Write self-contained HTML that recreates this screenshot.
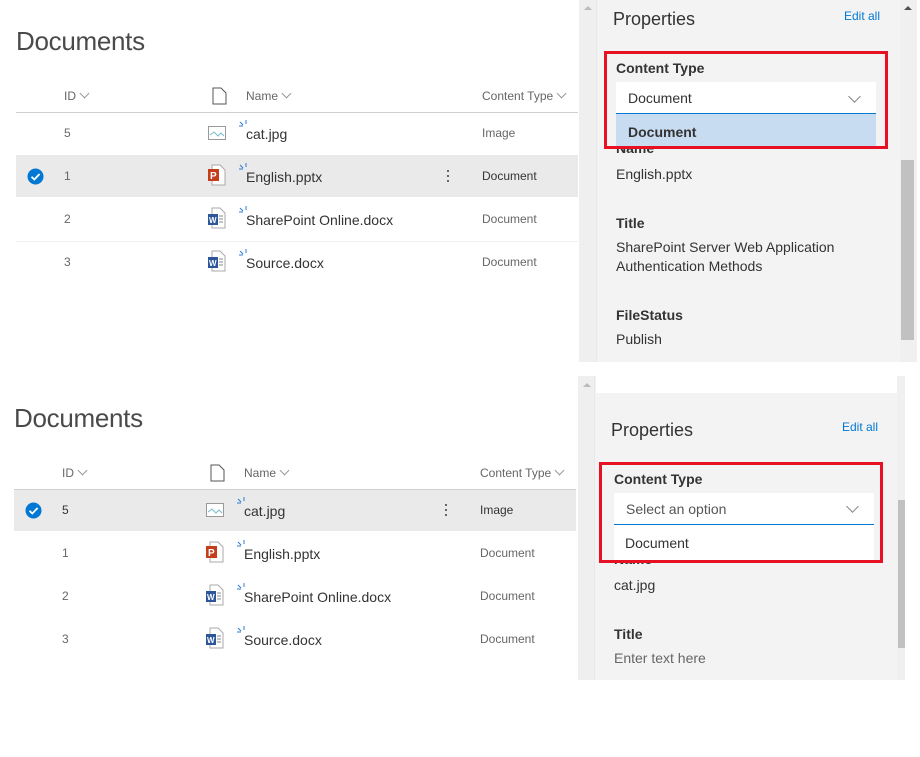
<!DOCTYPE html><html><head><meta charset="utf-8"><style>
*{margin:0;padding:0;box-sizing:border-box}
body{width:920px;height:682px;background:#fff;position:relative;overflow:hidden;font-family:"Segoe UI","Liberation Sans",sans-serif;color:#333}
.a{position:absolute;white-space:nowrap}
.sec{position:absolute;left:0;top:0;width:920px;height:380px}
.h{font-size:12px;color:#666;line-height:16px}
.n{font-size:14px;color:#333;line-height:18px}
.c{font-size:12px;color:#666;line-height:16px}
.lbl{font-size:14px;font-weight:bold;color:#333;line-height:18px}
.val{font-size:14px;color:#333;line-height:18px}
.t{font-size:26px;color:#4a4a4a;letter-spacing:-0.3px}
.chev{display:inline-block;width:7px;height:7px;border-right:1px solid #999;border-bottom:1px solid #999;transform:rotate(45deg);margin-left:5px;position:relative;top:-3px}
</style></head><body>

<div class="sec" style="left:0;top:0">
<div class="a t" style="left:16px;top:26px">Documents</div>
<div class="a h" style="left:64px;top:88px">ID<span class="chev"></span></div>
<svg class="a" style="left:212px;top:87px" width="15" height="18"><path d="M1 1h8l5 5v11H1z" fill="#fff" stroke="#555"/></svg>
<div class="a h" style="left:246px;top:88px">Name<span class="chev"></span></div>
<div class="a h" style="left:482px;top:88px">Content Type<span class="chev"></span></div>
<div class="a" style="left:16px;top:112px;width:562px;height:1px;background:#d0d0d0"></div>
<div class="a" style="left:16px;top:155px;width:562px;height:42px;background:#eaeaea"></div>
<div class="a" style="left:16px;top:241px;width:562px;height:1px;background:#f0f0f0"></div>
<svg class="a" style="left:27px;top:168px" width="17" height="17"><circle cx="8.5" cy="8.5" r="8" fill="#0078d4"/><path d="M4.5 8.7l2.8 2.8 5.3-5.5" stroke="#fff" stroke-width="1.8" fill="none"/></svg>
<div class="a c" style="left:64px;top:125px">5</div>
<div class="a c" style="left:64px;top:168px">1</div>
<div class="a c" style="left:64px;top:211px">2</div>
<div class="a c" style="left:64px;top:254px">3</div>
<svg class="a" style="left:208px;top:126px" width="20" height="16"><rect x="0.5" y="0.5" width="17" height="13" fill="#fff" stroke="#999"/><path d="M2 9l4-3 4 4 3-3 3 3" stroke="#7bc" fill="none"/></svg>
<svg class="a" style="left:207px;top:164px" width="20" height="22"><path d="M5 1h8l5 5v15H5z" fill="#fff" stroke="#aaa"/><rect x="1" y="5" width="11" height="12" fill="#c43e1c"/><text x="3" y="15" font-size="10" fill="#fff" font-family="Liberation Sans" font-weight="bold">P</text></svg>
<svg class="a" style="left:207px;top:207px" width="20" height="22"><path d="M5 1h8l5 5v15H5z" fill="#fff" stroke="#aaa"/><path d="M12 9h4M12 12h4M12 15h4" stroke="#888"/><rect x="1" y="7" width="10" height="11" fill="#2b579a"/><text x="2" y="16" font-size="8" fill="#fff" font-family="Liberation Sans" font-weight="bold">W</text></svg>
<svg class="a" style="left:207px;top:250px" width="20" height="22"><path d="M5 1h8l5 5v15H5z" fill="#fff" stroke="#aaa"/><path d="M12 9h4M12 12h4M12 15h4" stroke="#888"/><rect x="1" y="7" width="10" height="11" fill="#2b579a"/><text x="2" y="16" font-size="8" fill="#fff" font-family="Liberation Sans" font-weight="bold">W</text></svg>
<svg class="a" style="left:238px;top:120px" width="10" height="8"><path d="M1 6h4M2 2l3 3M8 0v4" stroke="#2b7cd3" stroke-width="1"/></svg>
<svg class="a" style="left:238px;top:163px" width="10" height="8"><path d="M1 6h4M2 2l3 3M8 0v4" stroke="#2b7cd3" stroke-width="1"/></svg>
<svg class="a" style="left:238px;top:206px" width="10" height="8"><path d="M1 6h4M2 2l3 3M8 0v4" stroke="#2b7cd3" stroke-width="1"/></svg>
<svg class="a" style="left:238px;top:249px" width="10" height="8"><path d="M1 6h4M2 2l3 3M8 0v4" stroke="#2b7cd3" stroke-width="1"/></svg>
<div class="a n" style="left:246px;top:125px">cat.jpg</div>
<div class="a n" style="left:246px;top:168px">English.pptx</div>
<div class="a n" style="left:246px;top:211px">SharePoint Online.docx</div>
<div class="a n" style="left:246px;top:254px">Source.docx</div>
<div class="a" style="left:447px;top:170px;width:2px;height:2px;background:#666;box-shadow:0 5px #666,0 10px #666"></div>
<div class="a c" style="left:482px;top:125px">Image</div>
<div class="a c" style="left:482px;top:168px;color:#333">Document</div>
<div class="a c" style="left:482px;top:211px">Document</div>
<div class="a c" style="left:482px;top:254px">Document</div>
<div class="a" style="left:579px;top:0;width:338px;height:362px;background:#f3f3f3"></div>
<div class="a" style="left:579px;top:0;width:18px;height:362px;background:#efefef;border-right:1px solid #e8e8e8"></div>
<div class="a" style="left:900px;top:0;width:17px;height:362px;background:#f0f0f0"></div>
<div class="a" style="left:901px;top:160px;width:13px;height:180px;background:#c1c1c1"></div>
<div class="a" style="left:584px;top:6px;width:0;height:0;border:4px solid transparent;border-bottom-color:#bbb;border-top:0"></div>
<div class="a" style="left:904px;top:6px;width:0;height:0;border:4px solid transparent;border-bottom-color:#505050;border-top:0"></div>
<div class="a" style="left:613px;top:9px;font-size:18px;color:#333">Properties</div>
<div class="a" style="left:844px;top:9px;font-size:12px;color:#0078d4">Edit all</div>
<div class="a lbl" style="left:616px;top:139px">Name</div>
<div class="a val" style="left:616px;top:165px">English.pptx</div>
<div class="a lbl" style="left:616px;top:214px">Title</div>
<div class="a val" style="left:616px;top:238px">SharePoint Server Web Application</div>
<div class="a val" style="left:616px;top:257px">Authentication Methods</div>
<div class="a lbl" style="left:616px;top:306px">FileStatus</div>
<div class="a val" style="left:616px;top:330px">Publish</div>
<div class="a lbl" style="left:616px;top:59px">Content Type</div>
<div class="a" style="left:616px;top:82px;width:260px;height:32px;background:#fff;border-bottom:1px solid #0078d4"></div>
<div class="a val" style="left:628px;top:89px">Document</div>
<div class="a" style="left:850px;top:92px;width:9px;height:9px;border-right:1px solid #888;border-bottom:1px solid #888;transform:rotate(45deg)"></div>
<div class="a" style="left:616px;top:114px;width:260px;height:33px;background:#c7dcf1"></div>
<div class="a lbl" style="left:628px;top:123px">Document</div>
<div class="a" style="left:604px;top:51px;width:284px;height:98px;border:3px solid #e81123"></div>
</div>

<div class="sec" style="left:-2px;top:377px">
<div class="a t" style="left:16px;top:26px">Documents</div>
<div class="a h" style="left:64px;top:88px">ID<span class="chev"></span></div>
<svg class="a" style="left:212px;top:87px" width="15" height="18"><path d="M1 1h8l5 5v11H1z" fill="#fff" stroke="#555"/></svg>
<div class="a h" style="left:246px;top:88px">Name<span class="chev"></span></div>
<div class="a h" style="left:482px;top:88px">Content Type<span class="chev"></span></div>
<div class="a" style="left:16px;top:112px;width:562px;height:1px;background:#d0d0d0"></div>
<div class="a" style="left:16px;top:113px;width:562px;height:41px;background:#eaeaea"></div>
<svg class="a" style="left:27px;top:125px" width="17" height="17"><circle cx="8.5" cy="8.5" r="8" fill="#0078d4"/><path d="M4.5 8.7l2.8 2.8 5.3-5.5" stroke="#fff" stroke-width="1.8" fill="none"/></svg>
<div class="a c" style="left:64px;top:125px;color:#333">5</div>
<div class="a c" style="left:64px;top:168px">1</div>
<div class="a c" style="left:64px;top:211px">2</div>
<div class="a c" style="left:64px;top:254px">3</div>
<svg class="a" style="left:208px;top:126px" width="20" height="16"><rect x="0.5" y="0.5" width="17" height="13" fill="#fff" stroke="#999"/><path d="M2 9l4-3 4 4 3-3 3 3" stroke="#7bc" fill="none"/></svg>
<svg class="a" style="left:207px;top:164px" width="20" height="22"><path d="M5 1h8l5 5v15H5z" fill="#fff" stroke="#aaa"/><rect x="1" y="5" width="11" height="12" fill="#c43e1c"/><text x="3" y="15" font-size="10" fill="#fff" font-family="Liberation Sans" font-weight="bold">P</text></svg>
<svg class="a" style="left:207px;top:207px" width="20" height="22"><path d="M5 1h8l5 5v15H5z" fill="#fff" stroke="#aaa"/><path d="M12 9h4M12 12h4M12 15h4" stroke="#888"/><rect x="1" y="7" width="10" height="11" fill="#2b579a"/><text x="2" y="16" font-size="8" fill="#fff" font-family="Liberation Sans" font-weight="bold">W</text></svg>
<svg class="a" style="left:207px;top:250px" width="20" height="22"><path d="M5 1h8l5 5v15H5z" fill="#fff" stroke="#aaa"/><path d="M12 9h4M12 12h4M12 15h4" stroke="#888"/><rect x="1" y="7" width="10" height="11" fill="#2b579a"/><text x="2" y="16" font-size="8" fill="#fff" font-family="Liberation Sans" font-weight="bold">W</text></svg>
<svg class="a" style="left:238px;top:120px" width="10" height="8"><path d="M1 6h4M2 2l3 3M8 0v4" stroke="#2b7cd3" stroke-width="1"/></svg>
<svg class="a" style="left:238px;top:163px" width="10" height="8"><path d="M1 6h4M2 2l3 3M8 0v4" stroke="#2b7cd3" stroke-width="1"/></svg>
<svg class="a" style="left:238px;top:206px" width="10" height="8"><path d="M1 6h4M2 2l3 3M8 0v4" stroke="#2b7cd3" stroke-width="1"/></svg>
<svg class="a" style="left:238px;top:249px" width="10" height="8"><path d="M1 6h4M2 2l3 3M8 0v4" stroke="#2b7cd3" stroke-width="1"/></svg>
<div class="a n" style="left:246px;top:125px">cat.jpg</div>
<div class="a n" style="left:246px;top:168px">English.pptx</div>
<div class="a n" style="left:246px;top:211px">SharePoint Online.docx</div>
<div class="a n" style="left:246px;top:254px">Source.docx</div>
<div class="a" style="left:447px;top:127px;width:2px;height:2px;background:#666;box-shadow:0 5px #666,0 10px #666"></div>
<div class="a c" style="left:482px;top:125px;color:#333">Image</div>
<div class="a c" style="left:482px;top:168px">Document</div>
<div class="a c" style="left:482px;top:211px">Document</div>
<div class="a c" style="left:482px;top:254px">Document</div>
</div>

<div class="a" style="left:578px;top:376px;width:327px;height:304px;background:#f3f3f3"></div>
<div class="a" style="left:578px;top:376px;width:17px;height:304px;background:#efefef;border-right:1px solid #e8e8e8"></div>
<div class="a" style="left:596px;top:376px;width:301px;height:17px;background:#fff"></div>
<div class="a" style="left:897px;top:376px;width:8px;height:304px;background:#f0f0f0"></div>
<div class="a" style="left:898px;top:500px;width:7px;height:148px;background:#c1c1c1"></div>
<div class="a" style="left:583px;top:383px;width:0;height:0;border:4px solid transparent;border-bottom-color:#bbb;border-top:0"></div>
<div class="a" style="left:611px;top:420px;font-size:18px;color:#333">Properties</div>
<div class="a" style="left:842px;top:420px;font-size:12px;color:#0078d4">Edit all</div>
<div class="a lbl" style="left:614px;top:550px">Name</div>
<div class="a val" style="left:614px;top:576px">cat.jpg</div>
<div class="a lbl" style="left:614px;top:625px">Title</div>
<div class="a val" style="left:614px;top:649px;color:#666">Enter text here</div>
<div class="a lbl" style="left:614px;top:470px">Content Type</div>
<div class="a" style="left:614px;top:493px;width:260px;height:32px;background:#fff;border-bottom:1px solid #0078d4"></div>
<div class="a val" style="left:626px;top:500px;color:#555">Select an option</div>
<div class="a" style="left:848px;top:502px;width:9px;height:9px;border-right:1px solid #888;border-bottom:1px solid #888;transform:rotate(45deg)"></div>
<div class="a" style="left:614px;top:525px;width:260px;height:36px;background:#fff"></div>
<div class="a val" style="left:625px;top:534px">Document</div>
<div class="a" style="left:599px;top:462px;width:284px;height:101px;border:3px solid #e81123"></div>
</body></html>
